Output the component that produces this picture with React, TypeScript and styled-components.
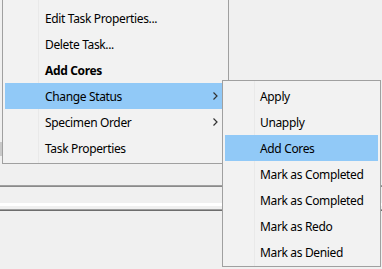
import React from 'react'
import styled, { createGlobalStyle } from 'styled-components'

const GlobalStyle = createGlobalStyle`
    html, body {
        margin: 0;
        padding: 0;
        background: #f0f0f0;
    }
    #root {
        width: 382px;
        height: 269px;
        overflow: hidden;
    }
`

const SScreen = styled.div`
    position: relative;
    display: flex;
    flex-direction: column;
    width: 382px;
    height: 269px;
    background: #f0f0f0;
    font-family: "Noto Sans", "Liberation Sans", sans-serif;
    font-size: 12px;
    letter-spacing: -0.35px;
    color: #000;
`

const SWindowTop = styled.div`
    display: flex;
    flex-direction: column;
    height: 185px;
    padding-top: 142px;
    box-sizing: border-box;
`

const SControlEdge = styled.div`
    width: 2px;
    height: 14px;
    background: #c9c9c9;
`

const SRule = styled.div<{ dark?: boolean }>`
    height: 2px;
    flex-shrink: 0;
    border-top: 1px solid #a0a0a0;
    border-bottom: 1px solid ${(props) => (props.dark ? '#6d6d6d' : '#8a8a8a')};
    box-sizing: border-box;
`

const SGap = styled.div<{ h: number; white?: boolean }>`
    height: ${(props) => props.h}px;
    flex-shrink: 0;
    background: ${(props) => (props.white ? '#ffffff' : '#f0f0f0')};
`

// popup menus float over the window behind them
const SMenu = styled.div<{ left: number; top: number; width: number; gutter: number; noTop?: boolean }>`
    position: absolute;
    left: ${(props) => props.left}px;
    top: ${(props) => props.top}px;
    width: ${(props) => props.width}px;
    display: flex;
    flex-direction: column;
    box-sizing: border-box;
    background: linear-gradient(
        to right,
        #f2f2f2 ${(props) => props.gutter}px,
        #e9e9e9 ${(props) => props.gutter}px,
        #e9e9e9 ${(props) => props.gutter + 1}px,
        #f2f2f2 ${(props) => props.gutter + 1}px
    );
    border: 1px solid #a0a0a0;
    border-top: ${(props) => (props.noTop ? 'none' : '1px solid #a0a0a0')};
    padding: ${(props) => (props.noTop ? '5px 2px 2px' : '2px 2px 1px')};
`

const SItem = styled.div<{ active?: boolean; bold?: boolean; indent: number }>`
    display: flex;
    align-items: center;
    height: 26px;
    padding-left: ${(props) => props.indent}px;
    padding-right: 8px;
    background: ${(props) => (props.active ? '#91c9f7' : 'transparent')};
    font-weight: ${(props) => (props.bold ? 700 : 400)};
    white-space: nowrap;
`

const SChevron = styled.svg`
    margin-left: auto;
    margin-top: -1px;
`

const Chevron = () => (
    <SChevron width="5" height="8" viewBox="0 0 5 8">
        <polyline points="0.5,0.5 4,4 0.5,7.5" fill="none" stroke="#333" strokeWidth="1.2" />
    </SChevron>
)

const mainItems = [
    { label: 'Edit Task Properties...' },
    { label: 'Delete Task...' },
    { label: 'Add Cores', bold: true },
    { label: 'Change Status', active: true, sub: true },
    { label: 'Specimen Order', sub: true },
    { label: 'Task Properties' },
]

const statusItems = [
    { label: 'Apply' },
    { label: 'Unapply' },
    { label: 'Add Cores', active: true },
    { label: 'Mark as Completed' },
    { label: 'Mark as Completed' },
    { label: 'Mark as Redo' },
    { label: 'Mark as Denied' },
]

const App: React.FC = () => {
    return (
        <SScreen>
            <GlobalStyle />
            <SWindowTop>
                <SControlEdge />
            </SWindowTop>
            <SRule />
            <SGap h={16} />
            <SGap h={3} white />
            <SGap h={3} />
            <SRule dark />

            <SMenu left={2} top={0} width={227} gutter={35} noTop>
                {mainItems.map((item) => (
                    <SItem key={item.label} indent={40} active={item.active} bold={item.bold}>
                        {item.label}
                        {item.sub && <Chevron />}
                    </SItem>
                ))}
            </SMenu>

            <SMenu left={222} top={80} width={159} gutter={31}>
                {statusItems.map((item, i) => (
                    <SItem key={i} indent={35} active={item.active}>
                        {item.label}
                    </SItem>
                ))}
            </SMenu>
        </SScreen>
    )
}

export default App
